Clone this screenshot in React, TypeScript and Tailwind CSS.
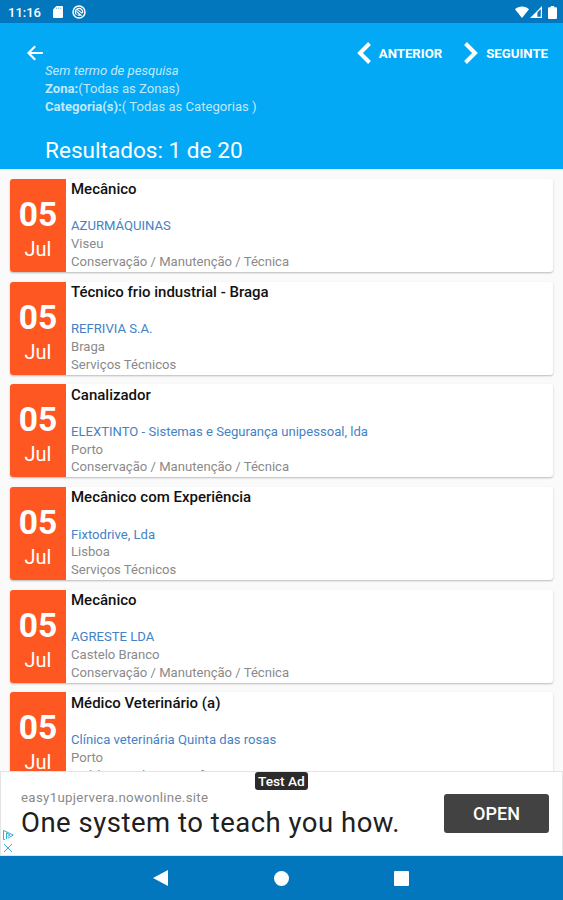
import type { ReactNode } from "react";

type Job = {
  id: number;
  day: string;
  month: string;
  title: string;
  company: string;
  city: string;
  category: string;
};

const jobs: Job[] = [
  {
    id: 1,
    day: "05",
    month: "Jul",
    title: "Mecânico",
    company: "AZURMÁQUINAS",
    city: "Viseu",
    category: "Conservação / Manutenção / Técnica",
  },
  {
    id: 2,
    day: "05",
    month: "Jul",
    title: "Técnico frio industrial - Braga",
    company: "REFRIVIA S.A.",
    city: "Braga",
    category: "Serviços Técnicos",
  },
  {
    id: 3,
    day: "05",
    month: "Jul",
    title: "Canalizador",
    company: "ELEXTINTO - Sistemas e Segurança unipessoal, lda",
    city: "Porto",
    category: "Conservação / Manutenção / Técnica",
  },
  {
    id: 4,
    day: "05",
    month: "Jul",
    title: "Mecânico com Experiência",
    company: "Fixtodrive, Lda",
    city: "Lisboa",
    category: "Serviços Técnicos",
  },
  {
    id: 5,
    day: "05",
    month: "Jul",
    title: "Mecânico",
    company: "AGRESTE LDA",
    city: "Castelo Branco",
    category: "Conservação / Manutenção / Técnica",
  },
  {
    id: 6,
    day: "05",
    month: "Jul",
    title: "Médico Veterinário (a)",
    company: "Clínica veterinária Quinta das rosas",
    city: "Porto",
    category: "Saúde / Medicina / Enf.",
  },
];

function StatusBar() {
  return (
    <div className="flex h-[23px] shrink-0 items-center bg-[#0277bd] pr-[6px] pl-2 text-white">
      <span className="mt-[2px] text-[13px] leading-none font-medium">11:16</span>
      <svg className="mt-[1px] ml-[12px] h-3 w-[10px]" viewBox="0 0 10 12" fill="currentColor">
        <path d="M3.4 0H9a1 1 0 0 1 1 1v10a1 1 0 0 1-1 1H1a1 1 0 0 1-1-1V3.4z" />
        <path d="M3.6 1.5v1.5M5.6 1.5v1.5M7.6 1.5v1.5" stroke="#0277bd" strokeWidth="0.5" />
      </svg>
      <svg
        className="mt-[1px] ml-[9px] h-[14px] w-[14px]"
        viewBox="0 0 14 14"
        fill="none"
        stroke="currentColor"
      >
        <circle cx="7" cy="7" r="6" strokeWidth="1.5" />
        <path
          d="M4.4 9.8A3.7 3.7 0 1 1 10.6 8M4.4 6.4l4.4 3.8H5.6M5.4 4.6l4.8 3.8"
          strokeWidth="1.2"
        />
      </svg>
      <div className="ml-auto flex items-center">
        <svg className="mt-[1px] h-3 w-[14px]" viewBox="0 0 14 12" fill="currentColor">
          <path d="M7 12 0 3.2C2 1.4 4.4.4 7 .4s5 1 7 2.8z" />
        </svg>
        <svg className="mt-[1px] ml-[1px] h-3 w-3" viewBox="0 0 12 12">
          <path fill="currentColor" fillRule="evenodd" d="M12 0v12H0zM10.8 3 7.4 6.4v4.4h3.4z" />
        </svg>
        <svg className="mt-[1px] ml-[6px] h-[13px] w-[9px]" viewBox="0 0 9 13" fill="currentColor">
          <path d="M2.8 0h3.4v1.3H8a1 1 0 0 1 1 1V12a1 1 0 0 1-1 1H1a1 1 0 0 1-1-1V2.3a1 1 0 0 1 1-1h1.8z" />
        </svg>
      </div>
    </div>
  );
}

function PagerButton({ path, children }: { path: string; children: ReactNode }) {
  return (
    <button type="button" className="flex items-center">
      <svg
        className="h-[22px] w-[14px]"
        viewBox="0 0 14 22"
        fill="none"
        stroke="currentColor"
        strokeWidth="4"
      >
        <path d={path} />
      </svg>
      <span className="mt-[1px] ml-[8px] text-[13.2px] leading-none font-bold">{children}</span>
    </button>
  );
}

function Header() {
  return (
    <header className="h-[146px] shrink-0 bg-[#03a9f4] text-white">
      <div className="flex h-[39px] items-end pr-[15px] pl-[27px]">
        <button type="button" aria-label="Voltar" className="mb-[1px]">
          <svg
            className="h-4 w-4"
            viewBox="0 0 16 16"
            fill="none"
            stroke="currentColor"
            strokeWidth="2.2"
          >
            <path d="M8.2 1.3 1.5 8l6.7 6.7M1.5 8h14.3" />
          </svg>
        </button>
        <div className="-mb-[2px] ml-auto flex gap-[22px]">
          <PagerButton path="M12.5 1.5 3 11l9.5 9.5">ANTERIOR</PagerButton>
          <PagerButton path="M1.5 1.5 11 11l-9.5 9.5">SEGUINTE</PagerButton>
        </div>
      </div>
      <div className="pl-[45px] text-[13.1px] leading-[17.8px] text-white/75">
        <p className="italic">Sem termo de pesquisa</p>
        <p>
          <b>Zona:</b>(Todas as Zonas)
        </p>
        <p>
          <b>Categoria(s):</b>( Todas as Categorias )
        </p>
      </div>
      <h1 className="mt-[21px] pl-[45px] text-[22.6px] leading-[30px]">Resultados: 1 de 20</h1>
    </header>
  );
}

function JobCard({ job }: { job: Job }) {
  return (
    <article className="flex h-[93px] shrink-0 overflow-hidden rounded-[3px] bg-white shadow-[0_1px_2px_rgba(0,0,0,0.26)]">
      <div className="flex w-14 flex-col items-center bg-[#ff5722] text-white">
        <span className="mt-[16px] text-[33.5px] leading-[40px] font-bold">{job.day}</span>
        <span className="mt-[2px] text-[20px] leading-[24px]">{job.month}</span>
      </div>
      <div className="pt-[2.2px] pl-[5px] text-[13.1px] leading-[17.8px] whitespace-nowrap text-[#8a8a8a]">
        <h2 className="mb-[18.5px] text-[15px] font-medium text-[#111]">{job.title}</h2>
        <p className="text-[#4482c4]">{job.company}</p>
        <p>{job.city}</p>
        <p>{job.category}</p>
      </div>
    </article>
  );
}

function AdBanner() {
  return (
    <aside className="relative flex h-[85px] shrink-0 items-center border border-[#e4e4e4] bg-white">
      <span className="absolute top-0 left-[254px] rounded-[3px] bg-[#2b2b2b] px-[3px] text-[13.7px] leading-[18px] font-medium text-white">
        Test Ad
      </span>
      <div className="absolute bottom-[2px] left-[1px] flex flex-col text-[#35b0d8]">
        <svg className="h-3 w-3" viewBox="0 0 12 12" fill="none" stroke="currentColor">
          <path d="M3 10.5H1.500v-9L11.300 6 6 9.200" />
          <path d="M4.500 10V4L8 6 5.500 7.500" />
        </svg>
        <svg className="mt-[2px] ml-[1px] h-[10px] w-[10px]" viewBox="0 0 10 10" stroke="currentColor">
          <path d="m1 1 8 8M9 1 1 9" />
        </svg>
      </div>
      <div className="pl-[20px] whitespace-nowrap">
        <p className="mt-[1px] text-[13.3px] leading-[16px] tracking-[0.3px] text-[#8a8a8a]">
          easy1upjervera.nowonline.site
        </p>
        <p className="text-[27.5px] leading-[33px] tracking-[0.5px] text-[#202020]">
          One system to teach you how.
        </p>
      </div>
      <button
        type="button"
        className="mr-[13px] ml-auto h-[39px] w-[105px] rounded-[3px] bg-[#424242] text-[18px] font-medium text-white"
      >
        OPEN
      </button>
    </aside>
  );
}

function NavBar() {
  return (
    <nav className="flex h-11 shrink-0 items-center bg-[#0277bd] text-white">
      <svg className="ml-[153px] h-4 w-[15px]" viewBox="0 0 15 16" fill="currentColor">
        <path d="M15 0v16L0 8z" />
      </svg>
      <span className="ml-[106px] h-[15px] w-[15px] rounded-full bg-white" />
      <span className="ml-[105px] h-[15px] w-[15px] rounded-[1px] bg-white" />
    </nav>
  );
}

export default function App() {
  return (
    <div className="flex h-[900px] w-[563px] flex-col overflow-hidden bg-[#fafafa] font-['Roboto',sans-serif]">
      <StatusBar />
      <Header />
      <main className="flex min-h-0 flex-1 flex-col gap-[9.7px] overflow-hidden px-[10px] pt-[10px]">
        {jobs.map((job) => (
          <JobCard key={job.id} job={job} />
        ))}
      </main>
      <AdBanner />
      <NavBar />
    </div>
  );
}
